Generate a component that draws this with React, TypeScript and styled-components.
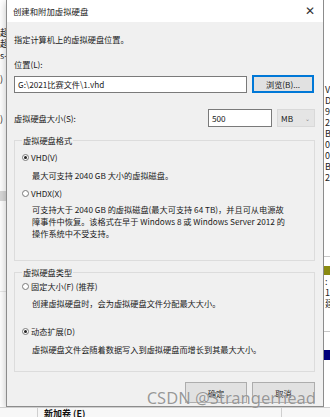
import styled, { createGlobalStyle } from 'styled-components'

const GlobalStyle = createGlobalStyle`
  html, body {
    margin: 0;
    padding: 0;
    background: #ffffff;
  }
  body {
    font-family: "Noto Sans CJK SC", "Noto Sans", sans-serif;
  }
`

const Screen = styled.div`
  position: relative;
  width: 330px;
  height: 417px;
  overflow: hidden;
  display: grid;
  grid-template-columns: 6px 318px 6px;
  grid-template-rows: 407px 10px;
  background: #ffffff;
`

const Strip = styled.div<{ $side: 'left' | 'right' }>`
  display: flex;
  flex-direction: column;
  align-items: ${(p) => (p.$side === 'left' ? 'flex-end' : 'flex-start')};
  overflow: hidden;
  background: #ffffff;
  border-top: 22px solid #ffffff;
  font-size: 9px;
  line-height: 10px;
  color: #222;
  white-space: nowrap;
`

const Frag = styled.div<{ $top: number; $bg?: string; $h?: number }>`
  margin-top: ${(p) => p.$top}px;
  height: ${(p) => p.$h ?? 10}px;
  width: 100%;
  background: ${(p) => p.$bg ?? 'transparent'};
  padding-left: 1px;
`

const BottomStrip = styled.div`
  grid-column: 1 / 4;
  display: flex;
  align-items: flex-start;
  background: #f7f7f7;
  border-top: 1px solid #cfcfcf;
  overflow: hidden;
`

const BottomCell = styled.div<{ $w: number }>`
  width: ${(p) => p.$w}px;
  height: 100%;
  border-right: 1px solid #cfcfcf;
  font-size: 9px;
  font-weight: 700;
  line-height: 12px;
  padding-left: 6px;
  color: #111;
  white-space: nowrap;
`

const Dialog = styled.div`
  display: flex;
  flex-direction: column;
  background: #f0f0f0;
  border: 1px solid #8c8c8c;
  border-top: none;
  box-shadow: 0 2px 8px rgba(0, 0, 0, 0.25);
  font-size: 8.2px;
  color: #1a1a1a;
  overflow: hidden;
`

const TitleBar = styled.div`
  height: 22px;
  background: #ffffff;
  display: flex;
  align-items: center;
  justify-content: space-between;
  padding: 0 6px 0 6px;
  font-size: 8.4px;
`

const Close = styled.span`
  font-size: 12px;
  color: #333;
  font-family: "DejaVu Sans", sans-serif;
  font-weight: 300;
  padding-right: 2px;
`

const Body = styled.div`
  display: flex;
  flex-direction: column;
  padding: 11px 8px 0 7px;
`

const Line = styled.div<{ $mt?: number }>`
  margin-top: ${(p) => p.$mt ?? 0}px;
  line-height: 12px;
  white-space: nowrap;
`

const Row = styled.div<{ $mt: number }>`
  margin-top: ${(p) => p.$mt}px;
  display: flex;
  align-items: center;
  gap: 5px;
`

const TextBox = styled.div<{ $w: number; $h?: number }>`
  width: ${(p) => p.$w}px;
  height: ${(p) => p.$h ?? 17}px;
  box-sizing: border-box;
  background: #ffffff;
  border: 1px solid #7a7a7a;
  display: flex;
  align-items: center;
  padding-left: 3px;
  white-space: nowrap;
`

const Button = styled.div<{ $primary?: boolean; $w: number; $h: number }>`
  width: ${(p) => p.$w}px;
  height: ${(p) => p.$h}px;
  box-sizing: border-box;
  background: #e1e1e1;
  border: 1px solid ${(p) => (p.$primary ? '#0078d7' : '#adadad')};
  box-shadow: ${(p) => (p.$primary ? 'inset 0 0 0 1px #0078d7' : 'none')};
  display: flex;
  align-items: center;
  justify-content: center;
  white-space: nowrap;
`

const SizeLabel = styled.div`
  flex: 1;
  white-space: nowrap;
`

const Select = styled.div`
  width: 38px;
  height: 18px;
  box-sizing: border-box;
  background: #e5e5e5;
  border: 1px solid #d9d9d9;
  display: flex;
  align-items: center;
  justify-content: space-between;
  padding: 0 4px 0 3px;
`

const Chevron = styled.span`
  font-size: 6px;
  color: #888;
`

const Group = styled.fieldset<{ $mt: number; $h: number }>`
  margin: ${(p) => p.$mt}px 0 0 0;
  height: ${(p) => p.$h}px;
  box-sizing: border-box;
  border: 1px solid #dcdcdc;
  padding: 0 4px 0 7px;
  min-width: 0;
`

const Legend = styled.legend`
  padding: 0 1px;
  margin-left: 0;
  line-height: 12px;
`

const Option = styled.div<{ $mt: number }>`
  margin-top: ${(p) => p.$mt}px;
  display: flex;
  align-items: center;
  gap: 2px;
  line-height: 12px;
  white-space: nowrap;
`

const Radio = styled.span<{ $on?: boolean }>`
  width: 5px;
  height: 5px;
  border-radius: 50%;
  border: 1px solid #7a7a7a;
  background: #ffffff;
  display: inline-flex;
  align-items: center;
  justify-content: center;

  &::after {
    content: '';
    width: 3px;
    height: 3px;
    border-radius: 50%;
    background: ${(p) => (p.$on ? '#222' : 'transparent')};
  }
`

const Desc = styled.div<{ $mt: number }>`
  margin-top: ${(p) => p.$mt}px;
  padding-left: 10px;
  line-height: 12px;
  white-space: nowrap;
`

const Footer = styled.div`
  margin-top: 10px;
  display: flex;
  justify-content: flex-end;
  gap: 5px;
`

const Watermark = styled.div`
  position: absolute;
  right: 14px;
  top: 388px;
  font-family: "Noto Sans", sans-serif;
  font-size: 16.5px;
  line-height: 20px;
  color: rgba(120, 120, 120, 0.75);
  text-shadow: 0 0 1px rgba(255, 255, 255, 0.8);
  pointer-events: none;
  white-space: nowrap;
`

export default function App() {
  return (
    <>
      <GlobalStyle />
      <Screen>
        <Strip $side="left">
          <Frag $top={6}>超</Frag>
          <Frag $top={1}>超</Frag>
          <Frag $top={2}>s-</Frag>
          <Frag $top={13}>)</Frag>
          <Frag $top={30}>)</Frag>
          <Frag $top={67} $bg="#d8d8d8" $h={10} />
          <Frag $top={90} $bg="#e8e8e8" $h={1} />
        </Strip>

        <Dialog>
          <TitleBar>
            <span>创建和附加虚拟硬盘</span>
            <Close>✕</Close>
          </TitleBar>
          <Body>
            <Line>指定计算机上的虚拟硬盘位置。</Line>
            <Line $mt={13}>位置(L):</Line>
            <Row $mt={5}>
              <TextBox $w={233}>G:\2021比赛文件\1.vhd</TextBox>
              <Button $primary $w={62} $h={18}>浏览(B)...</Button>
            </Row>
            <Row $mt={16}>
              <SizeLabel>虚拟硬盘大小(S):</SizeLabel>
              <TextBox $w={64} $h={18}>500</TextBox>
              <Select>
                <span>MB</span>
                <Chevron>⌄</Chevron>
              </Select>
            </Row>

            <Group $mt={7} $h={127}>
              <Legend>虚拟硬盘格式</Legend>
              <Option $mt={5}>
                <Radio $on />
                <span>VHD(V)</span>
              </Option>
              <Desc $mt={6}>最大可支持 2040 GB 大小的虚拟磁盘。</Desc>
              <Option $mt={6}>
                <Radio />
                <span>VHDX(X)</span>
              </Option>
              <Desc $mt={4}>
                可支持大于 2040 GB 的虚拟磁盘(最大可支持 64 TB)，并且可从电源故
                <br />
                障事件中恢复。该格式在早于 Windows 8 或 Windows Server 2012 的
                <br />
                操作系统中不受支持。
              </Desc>
            </Group>

            <Group $mt={5} $h={106}>
              <Legend>虚拟硬盘类型</Legend>
              <Option $mt={2}>
                <Radio />
                <span>固定大小(F) (推荐)</span>
              </Option>
              <Desc $mt={5}>创建虚拟硬盘时，会为虚拟硬盘文件分配最大大小。</Desc>
              <Option $mt={16}>
                <Radio $on />
                <span>动态扩展(D)</span>
              </Option>
              <Desc $mt={6}>虚拟硬盘文件会随着数据写入到虚拟硬盘而增长到其最大大小。</Desc>
            </Group>

            <Footer>
              <Button $w={62} $h={21}>确定</Button>
              <Button $w={63} $h={21}>取消</Button>
            </Footer>
          </Body>
        </Dialog>

        <Strip $side="right">
          <Frag $top={63}>V</Frag>
          <Frag $top={1}>D</Frag>
          <Frag $top={1}>9</Frag>
          <Frag $top={1}>2</Frag>
          <Frag $top={1}>B</Frag>
          <Frag $top={1}>0</Frag>
          <Frag $top={1}>0</Frag>
          <Frag $top={1}>B</Frag>
          <Frag $top={1}>2</Frag>
          <Frag $top={73} $bg="#c8c8c8" $h={1} />
          <Frag $top={9} $bg="#8a8a10" $h={9} />
          <Frag $top={2}>:</Frag>
          <Frag $top={1}>1</Frag>
          <Frag $top={1}>建</Frag>
          <Frag $top={22} $bg="#c8c8c8" $h={1} />
          <Frag $top={18} $bg="#00007a" $h={10} />
        </Strip>

        <BottomStrip>
          <BottomCell $w={31} />
          <BottomCell $w={237}>新加卷 (E)</BottomCell>
        </BottomStrip>

        <Watermark>CSDN @Strangerhead</Watermark>
      </Screen>
    </>
  )
}
